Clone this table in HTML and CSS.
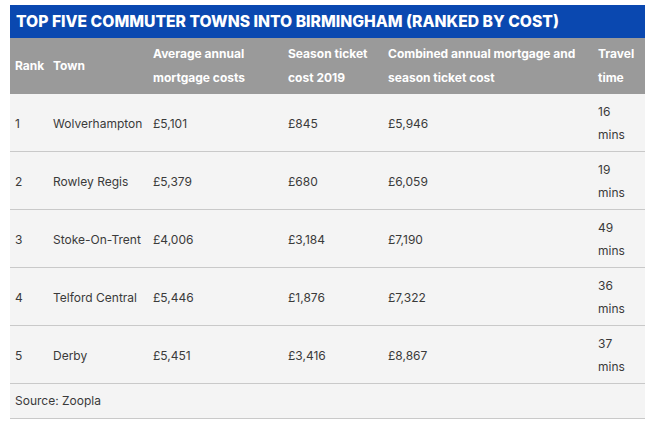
FILE: index.html
```html
<!DOCTYPE html>
<html>
<head>
<meta charset="utf-8">
<link rel="stylesheet" href="styles.css">
</head>
<body>
<div class="wrap">
  <div class="title">TOP FIVE COMMUTER TOWNS INTO BIRMINGHAM (RANKED BY COST)</div>
  <table class="tbl">
    <colgroup>
      <col class="c-rank"><col class="c-town"><col class="c-avg"><col class="c-season"><col class="c-comb"><col class="c-time">
    </colgroup>
    <thead>
      <tr>
        <th>Rank</th><th>Town</th><th>Average annual mortgage costs</th><th>Season ticket cost 2019</th><th>Combined annual mortgage and season ticket cost</th><th>Travel time</th>
      </tr>
    </thead>
    <tbody>
      <tr><td>1</td><td class="town">Wolverhampton</td><td>£5,101</td><td>£845</td><td>£5,946</td><td>16 mins</td></tr>
      <tr><td>2</td><td class="town">Rowley Regis</td><td>£5,379</td><td>£680</td><td>£6,059</td><td>19 mins</td></tr>
      <tr><td>3</td><td class="town">Stoke-On-Trent</td><td>£4,006</td><td>£3,184</td><td>£7,190</td><td>49 mins</td></tr>
      <tr><td>4</td><td class="town">Telford Central</td><td>£5,446</td><td>£1,876</td><td>£7,322</td><td>36 mins</td></tr>
      <tr><td>5</td><td class="town">Derby</td><td>£5,451</td><td>£3,416</td><td>£8,867</td><td>37 mins</td></tr>
      <tr class="src"><td colspan="6">Source: Zoopla</td></tr>
    </tbody>
  </table>
</div>
</body>
</html>
```
FILE: styles.css
```css
html, body { margin: 0; padding: 0; background: #fff; }
body { font-family: Inter, "Noto Sans", sans-serif; color: #333; }
.wrap { margin: 5px 0 0 10px; width: 635px; }
.title {
  background: #0a48b0;
  color: #fff;
  font-weight: 800;
  font-size: 15.7px;
  height: 33px;
  line-height: 33px;
  padding-left: 6px;
  letter-spacing: 0;
}
.tbl { width: 635px; border-collapse: collapse; table-layout: fixed; background: #f4f4f4; }
.c-rank { width: 38px; }
.c-town { width: 100px; }
.c-avg { width: 135px; }
.c-season { width: 100px; }
.c-comb { width: 210px; }
.c-time { width: 52px; }
.tbl th {
  background: #9a9a9a;
  color: #fff;
  font-size: 12px;
  font-weight: 700;
  text-align: left;
  line-height: 24px;
  padding: 4px 5px;
  vertical-align: middle;
}
.tbl td {
  font-size: 12px;
  line-height: 23px;
  padding: 6px 5px 5px;
  border-bottom: 1px solid #c9c9c9;
  vertical-align: middle;
  height: 46px;
  color: #3a3a3a;
}
.tbl td.town { white-space: nowrap; }
.tbl tr.src td { height: 24px; line-height: 24px; padding: 5px 5px; }
```
